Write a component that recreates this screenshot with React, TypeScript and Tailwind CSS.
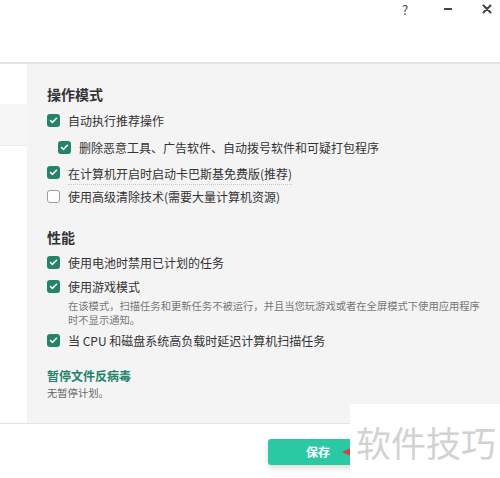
import { Check } from "lucide-react";

const font = { fontFamily: '"Noto Sans CJK SC", "Noto Sans", sans-serif' };

const CheckBox = ({ checked }: { checked: boolean }) =>
  checked ? (
    <span className="w-[13px] h-[13px] rounded-[3px] bg-[#23846a] flex items-center justify-center shrink-0">
      <Check className="w-[9px] h-[9px] text-white" strokeWidth={4} />
    </span>
  ) : (
    <span className="w-[13px] h-[13px] rounded-[3px] bg-white border border-[#9c9c9c] shrink-0" />
  );

const Option = ({
  checked = true,
  label,
  className = "",
  dotted = false,
}: {
  checked?: boolean;
  label: string;
  className?: string;
  dotted?: boolean;
}) => (
  <div className={`flex items-center h-[20px] gap-[8px] ${className}`}>
    <CheckBox checked={checked} />
    <span
      className={`text-[12px] leading-[20px] text-[#333] ${
        dotted ? "border-b border-dotted border-[#c8c8c8] leading-[17px] mt-[3px]" : ""
      }`}
    >
      {label}
    </span>
  </div>
);

export default function App() {
  return (
    <div className="relative w-[500px] h-[478px] bg-white flex flex-col overflow-hidden" style={font}>
      {/* title bar */}
      <div className="h-[62px] shrink-0 flex justify-end items-start pr-[5px] pt-[1px] text-[#444]">
        <span className="w-[16px] h-[16px] flex items-center justify-center text-[13px] leading-none">?</span>
        <span className="w-[16px] h-[16px] ml-[27px] flex items-center justify-center">
          <svg width="10" height="10" viewBox="0 0 10 10" fill="none">
            <rect x="1" y="4" width="8" height="2" fill="#444" />
          </svg>
        </span>
        <span className="w-[16px] h-[16px] ml-[23px] flex items-center justify-center">
          <svg width="10" height="10" viewBox="0 0 10 10" fill="none">
            <path d="M1.5 1.5L8.5 8.5M8.5 1.5L1.5 8.5" stroke="#444" strokeWidth="2" strokeLinecap="round" />
          </svg>
        </span>
      </div>

      <div className="h-[1.5px] shrink-0 bg-[#e4e4e4]" />

      <div className="flex h-[359px] shrink-0">
        {/* side nav */}
        <div className="w-[27px] bg-white">
          <div className="mt-[40px] h-[42px] bg-[#f6f6f6] border-b border-[#ececec]" />
        </div>

        {/* settings panel */}
        <div className="flex-1 bg-[#f4f4f4] pl-[20px] flex flex-col">
          <h2 className="mt-[20px] text-[14px] leading-[20px] font-bold text-[#333]">操作模式</h2>
          <Option className="mt-[7px]" label="自动执行推荐操作" />
          <Option className="mt-[7px] ml-[11px]" label="删除恶意工具、广告软件、自动拨号软件和可疑打包程序" />
          <Option className="mt-[5px]" label="在计算机开启时启动卡巴斯基免费版(推荐)" dotted />
          <Option className="mt-[4px]" checked={false} label="使用高级清除技术(需要大量计算机资源)" />

          <h2 className="mt-[20px] text-[14px] leading-[20px] font-bold text-[#333]">性能</h2>
          <Option className="mt-[6px]" label="使用电池时禁用已计划的任务" />
          <Option className="mt-[4px]" label="使用游戏模式" />
          <p className="mt-[2px] ml-[21px] text-[10.3px] leading-[14px] text-[#777]">
            在该模式，扫描任务和更新任务不被运行，并且当您玩游戏或者在全屏模式下使用应用程序
            <br />
            时不显示通知。
          </p>
          <Option className="mt-[4px]" label="当 CPU 和磁盘系统高负载时延迟计算机扫描任务" />

          <a className="mt-[15px] text-[12px] leading-[20px] font-bold text-[#23846a]">暂停文件反病毒</a>
          <p className="text-[10.3px] leading-[14px] text-[#666]">无暂停计划。</p>
        </div>
      </div>

      {/* footer */}
      <div className="flex-1 border-t border-[#e4e4e4] pl-[268px] pt-[14px]">
        <button className="relative w-[100px] h-[26px] rounded-[3px] bg-[#2bc9a3] text-white text-[12px] font-bold shadow-[0_3px_6px_rgba(0,0,0,0.15)]">
          保存
          {/* annotation arrow */}
          <span className="absolute left-[74px] top-[9px] w-0 h-0 border-y-[4px] border-y-transparent border-r-[9px] border-r-[#e0393e]" />
        </button>
      </div>

      {/* watermark */}
      <div className="absolute left-[350px] top-[404px] w-[150px] h-[74px] bg-white flex items-center pl-[6px]">
        <span className="text-[35px] leading-none whitespace-nowrap text-[#d2d2d2]">软件技巧</span>
      </div>
    </div>
  );
}
